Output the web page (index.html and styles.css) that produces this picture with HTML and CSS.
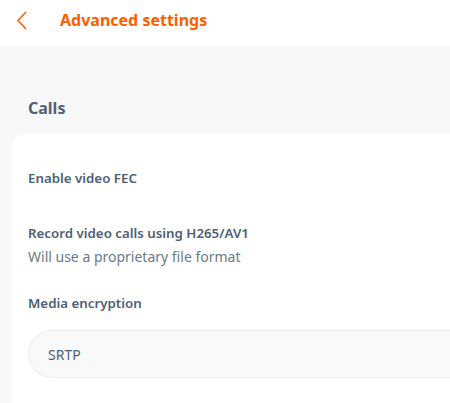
FILE: index.html
```html
<!DOCTYPE html>
<html lang="en">
<head>
  <meta charset="UTF-8" />
  <meta name="viewport" content="width=device-width, initial-scale=1.0"/>
  <title>Advanced settings</title>
  <link rel="stylesheet" href="styles.css">
</head>
<body>

  <header class="top-bar">
    <button class="back-btn" type="button" aria-label="Back">
      <svg width="12" height="19" viewBox="0 0 12 19">
        <polyline points="10,1 2,9.5 10,18" fill="none" stroke="#fe5e00" stroke-width="1.6" />
      </svg>
    </button>
    <h1 class="page-title">Advanced settings</h1>
  </header>

  <main class="content">
    <h2 class="section-title">Calls</h2>

    <section class="card">
      <div class="setting first">
        <div class="setting-label">Enable video FEC</div>
      </div>

      <div class="setting">
        <div class="setting-label">Record video calls using H265/AV1</div>
        <div class="setting-desc">Will use a proprietary file format</div>
      </div>

      <div class="setting">
        <div class="setting-label">Media encryption</div>
        <div class="combo">SRTP</div>
      </div>
    </section>
  </main>

</body>
</html>
```

FILE: styles.css
```css
html, body {
  margin: 0;
  height: 100%;
}
body {
  font-family: "Noto Sans", sans-serif;
  background-color: #f8f8f8;
  overflow: hidden;
}
.top-bar {
  background: white;
  height: 46px;
  box-sizing: border-box;
  padding-bottom: 6px;
  display: flex;
  align-items: center;
}
.back-btn {
  background: none;
  border: none;
  padding: 0;
  margin-left: 16px;
  width: 14px;
  height: 20px;
  display: flex;
  align-items: center;
}
.page-title {
  margin: 0 0 0 30px;
  font-size: 16px;
  font-weight: 700;
  color: #fe5e00;
}
.content {
  padding-left: 12px;
}
.section-title {
  margin: 0;
  padding: 51px 0 0 16px;
  height: 37px;
  font-size: 16px;
  font-weight: 700;
  color: #4e6074;
}
.card {
  background: white;
  border-radius: 12px 0 0 12px;
  padding: 34px 0 40px 16px;
  display: flex;
  flex-direction: column;
  gap: 25px;
}
.setting.first {
  padding-bottom: 10px;
}
.setting-label {
  font-size: 13.3px;
  font-weight: 650;
  color: #4e6074;
  line-height: 20px;
}
.setting-desc {
  margin-top: 3px;
  font-size: 14px;
  color: #6c7a87;
  line-height: 22px;
}
.combo {
  margin-top: 17px;
  height: 46px;
  border: 1px solid #ececec;
  border-right: none;
  border-radius: 24px 0 0 24px;
  background: #f9f9f9;
  display: flex;
  align-items: center;
  padding-left: 19px;
  font-size: 14px;
  color: #4e6074;
}
```
